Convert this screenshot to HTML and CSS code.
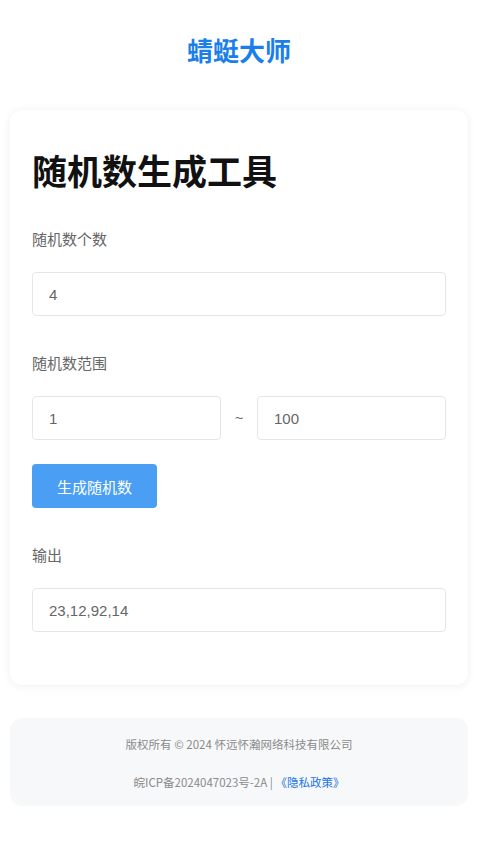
FILE: index.html
```html
<!DOCTYPE html>
<html lang="zh-CN">
<head>
<meta charset="utf-8">
<title>随机数生成工具 - 蜻蜓大师</title>
<link rel="stylesheet" href="styles.css">
</head>
<body>
<header class="site-header">
  <div class="brand">蜻蜓大师</div>
</header>
<main class="card">
  <h1 class="title">随机数生成工具</h1>
  <div class="field">
    <div class="label">随机数个数</div>
    <input class="input" type="text" value="4">
  </div>
  <div class="field">
    <div class="label">随机数范围</div>
    <div class="range">
      <input class="input" type="text" value="1">
      <span class="tilde">~</span>
      <input class="input" type="text" value="100">
    </div>
  </div>
  <button class="btn" type="button">生成随机数</button>
  <div class="field output-field">
    <div class="label">输出</div>
    <input class="input" type="text" value="23,12,92,14">
  </div>
</main>
<footer class="footer">
  <p class="footer-line">版权所有 © 2024 怀远怀瀚网络科技有限公司</p>
  <p class="footer-line">皖ICP备2024047023号-2A | <a class="footer-link" href="#">《隐私政策》</a></p>
</footer>
</body>
</html>
```
FILE: styles.css
```css
* { box-sizing: border-box; }
html, body { margin: 0; padding: 0; background: #ffffff; }
body {
  padding: 0 10px;
  font-family: "Liberation Sans", "Noto Sans CJK SC", sans-serif;
  color: #333;
}
.site-header {
  padding-top: 32px;
  height: 110px;
  text-align: center;
}
.brand {
  font-family: "Noto Sans CJK SC", sans-serif;
  font-size: 26px;
  line-height: 36px;
  font-weight: 700;
  color: #1a7fe8;
}
.card {
  display: block;
  background: #fff;
  border-radius: 12px;
  box-shadow: 0 1px 8px rgba(0, 0, 0, 0.07);
  padding: 22px 22px 53px;
}
.title {
  margin: 16px 0 0;
  font-family: "Noto Sans CJK SC", sans-serif;
  font-size: 35px;
  line-height: 44px;
  font-weight: 700;
  color: #111;
}
.field { margin-top: 37px; }
.label {
  font-family: "Noto Sans CJK SC", sans-serif;
  font-size: 15px;
  line-height: 20px;
  color: #666;
  margin-bottom: 23px;
}
.input {
  display: block;
  width: 100%;
  height: 44px;
  border: 1px solid #e4e6ea;
  border-radius: 4px;
  padding: 0 16px;
  font-family: "Liberation Sans", "Noto Sans CJK SC", sans-serif;
  font-size: 15px;
  color: #666;
  background: #fff;
  outline: none;
}
.range {
  display: flex;
  align-items: center;
}
.range .input { flex: 1; min-width: 0; }
.tilde {
  width: 36px;
  text-align: center;
  font-size: 14px;
  color: #666;
}
.btn {
  display: block;
  margin-top: 24px;
  width: 125px;
  height: 44px;
  border: none;
  border-radius: 4px;
  background: #4a9ff5;
  color: #fff;
  font-family: "Noto Sans CJK SC", sans-serif;
  font-size: 15px;
  cursor: pointer;
}
.footer {
  margin-top: 33px;
  background: #f7f8fa;
  border-radius: 12px;
  padding: 16px 0 14px;
  text-align: center;
}
.footer-line {
  margin: 0;
  font-family: "Noto Sans CJK SC", sans-serif;
  font-size: 11.5px;
  line-height: 20px;
  color: #8a8a8a;
}
.footer-line + .footer-line { margin-top: 18px; }
.footer-link { color: #1a73e8; text-decoration: none; }
```
